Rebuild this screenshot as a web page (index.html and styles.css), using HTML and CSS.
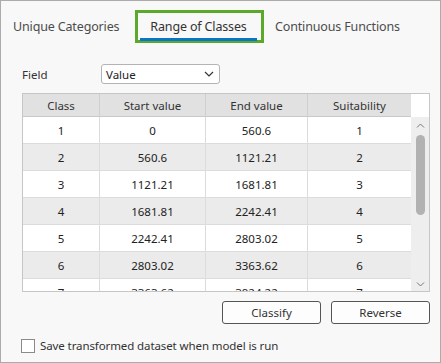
FILE: index.html
```html
<!DOCTYPE html>
<html lang="en">
<head>
    <meta charset="UTF-8">
    <title>Range of Classes</title>
    <link rel="stylesheet" href="styles.css">
</head>
<body>
    <div class="panel">
        <!-- Tabs -->
        <div class="tabs">
            <div class="tab first">Unique Categories</div>
            <div class="tab active"><span class="tab-label">Range of Classes</span></div>
            <div class="tab">Continuous Functions</div>
        </div>

        <!-- Field selector -->
        <div class="field-row">
            <label class="field-label">Field</label>
            <div class="select">
                <span>Value</span>
                <svg width="10" height="6" viewBox="0 0 10 6"><path d="M1 1l4 4 4-4" fill="none" stroke="#333" stroke-width="1.2"/></svg>
            </div>
        </div>

        <!-- Class table -->
        <div class="table">
            <div class="table-main">
                <div class="row head">
                    <div class="cell">Class</div>
                    <div class="cell">Start value</div>
                    <div class="cell">End value</div>
                    <div class="cell">Suitability</div>
                </div>
                <div class="body">
                    <div class="row"><div class="cell">1</div><div class="cell">0</div><div class="cell">560.6</div><div class="cell">1</div></div>
                    <div class="row alt"><div class="cell">2</div><div class="cell">560.6</div><div class="cell">1121.21</div><div class="cell">2</div></div>
                    <div class="row"><div class="cell">3</div><div class="cell">1121.21</div><div class="cell">1681.81</div><div class="cell">3</div></div>
                    <div class="row alt"><div class="cell">4</div><div class="cell">1681.81</div><div class="cell">2242.41</div><div class="cell">4</div></div>
                    <div class="row"><div class="cell">5</div><div class="cell">2242.41</div><div class="cell">2803.02</div><div class="cell">5</div></div>
                    <div class="row alt"><div class="cell">6</div><div class="cell">2803.02</div><div class="cell">3363.62</div><div class="cell">6</div></div>
                    <div class="row"><div class="cell">7</div><div class="cell">3363.62</div><div class="cell">3924.22</div><div class="cell">7</div></div>
                </div>
            </div>
            <div class="scrollbar">
                <div class="scroll-corner"></div>
                <div class="scroll-track">
                    <svg class="arrow" width="9" height="5" viewBox="0 0 9 5"><path d="M1 4.5l3.5-3.5 3.5 3.5" fill="none" stroke="#777" stroke-width="1"/></svg>
                    <div class="thumb"></div>
                    <div class="track-fill"></div>
                    <svg class="arrow" width="9" height="5" viewBox="0 0 9 5"><path d="M1 0.5l3.5 3.5 3.5-3.5" fill="none" stroke="#777" stroke-width="1"/></svg>
                </div>
            </div>
        </div>

        <!-- Buttons -->
        <div class="actions">
            <button class="btn">Classify</button>
            <button class="btn">Reverse</button>
        </div>

        <!-- Checkbox -->
        <label class="check-row">
            <span class="checkbox"></span>
            Save transformed dataset when model is run
        </label>
    </div>
</body>
</html>
```

FILE: styles.css
```css
body {
    margin: 0;
    font-family: "Noto Sans", "Open Sans", sans-serif;
    color: #333;
}
.panel {
    box-sizing: border-box;
    width: 441px;
    height: 363px;
    border: 1px solid #ababab;
    background-color: #f8f8f8;
    padding: 9px 0 0 12px;
}
.tabs {
    display: flex;
    align-items: center;
    height: 33px;
    font-size: 12.5px;
    letter-spacing: -0.15px;
    color: #4c4c4c;
}
.tab {
    white-space: nowrap;
}
.tab.first {
    width: 108px;
}
.tab.active {
    box-sizing: border-box;
    width: 129px;
    height: 33px;
    margin: 0 11px 0 14px;
    border: 3px solid #5ca82a;
    padding: 0 4px 0 2px;
    color: #333;
}
.tab-label {
    display: block;
    height: 21px;
    margin-top: 4px;
    border-bottom: 3px solid #0a74c9;
    text-align: center;
    line-height: 20px;
}
.field-row {
    display: flex;
    align-items: center;
    margin-top: 21px;
    margin-left: 9px;
    font-size: 11.5px;
}
.field-label {
    width: 79px;
}
.select {
    box-sizing: border-box;
    width: 119px;
    height: 20px;
    display: flex;
    align-items: center;
    justify-content: space-between;
    padding: 0 5px 0 4px;
    border: 1px solid #b4b4b4;
    border-radius: 3px;
    background-color: white;
    color: #222;
}
.table {
    box-sizing: border-box;
    display: flex;
    width: 408px;
    height: 199px;
    margin: 9px 0 0 9px;
    border: 1px solid #c6c6c6;
    font-size: 11.5px;
    color: #222;
}
.table-main {
    width: 388px;
    overflow: hidden;
}
.row {
    display: grid;
    grid-template-columns: 77px 106px 102px 103px;
    height: 27px;
    box-sizing: border-box;
    border-bottom: 1px solid #dcdcdc;
    background-color: white;
}
.row.alt {
    background-color: #ebebeb;
}
.row.head {
    height: 23px;
    background-color: #e1e1e1;
    border-bottom: 1px solid #c9c9c9;
    color: #333;
}
.cell {
    display: flex;
    align-items: center;
    justify-content: center;
    border-right: 1px solid #dcdcdc;
}
.cell:last-child {
    border-right: none;
}
.head .cell {
    border-right-color: #cfcfcf;
}
.scrollbar {
    width: 18px;
    display: flex;
    flex-direction: column;
}
.scroll-corner {
    height: 23px;
    background-color: white;
}
.scroll-track {
    flex: 1;
    display: flex;
    flex-direction: column;
    align-items: center;
    background-color: #eeeeee;
    padding: 6px 0 4px;
}
.arrow {
    display: block;
}
.thumb {
    width: 9px;
    height: 80px;
    margin-top: 7px;
    border-radius: 5px;
    background-color: #b2b2b2;
}
.track-fill {
    flex: 1;
}
.actions {
    display: flex;
    justify-content: flex-end;
    gap: 10px;
    width: 417px;
    margin-top: 9px;
}
.btn {
    box-sizing: border-box;
    width: 99px;
    height: 23px;
    border: 1px solid #555;
    border-radius: 3px;
    background-color: #fdfdfd;
    font-family: inherit;
    font-size: 11.5px;
    color: #333;
    padding: 0;
}
.check-row {
    display: flex;
    align-items: center;
    gap: 5px;
    margin: 14px 0 0 8px;
    font-size: 11.5px;
    letter-spacing: -0.1px;
    color: #333;
}
.checkbox {
    box-sizing: border-box;
    width: 14px;
    height: 14px;
    border: 1px solid #8a8a8a;
    background-color: white;
}
```
